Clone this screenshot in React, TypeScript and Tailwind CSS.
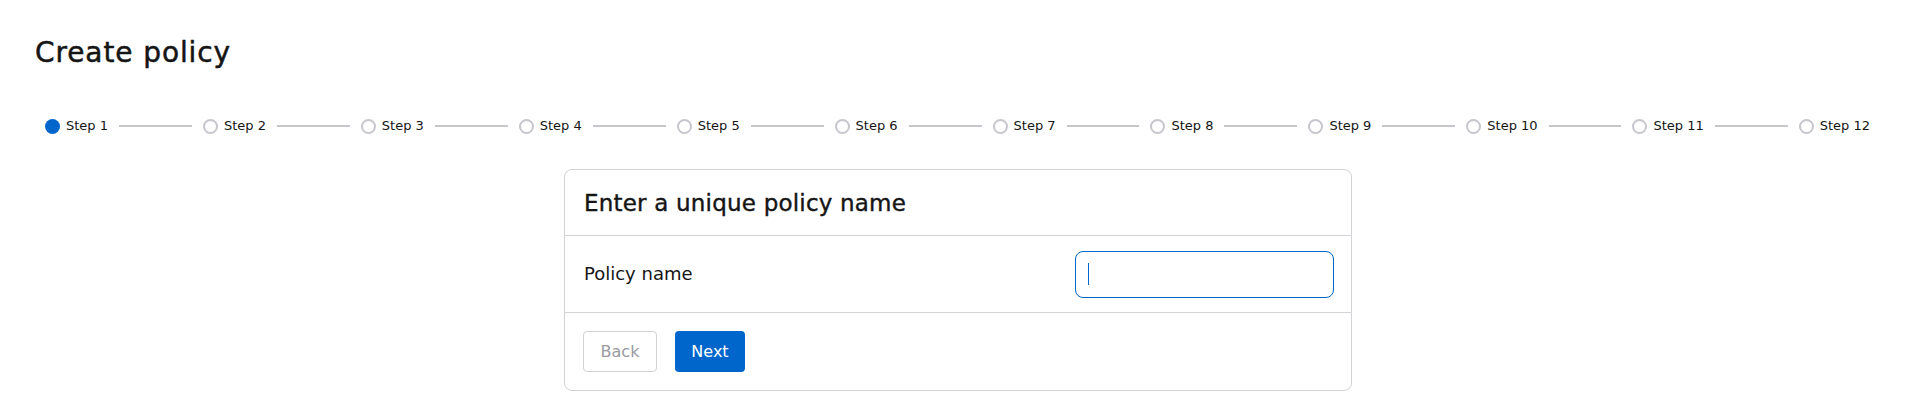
import React from "react";

const steps = Array.from({ length: 12 }, (_, i) => `Step ${i + 1}`);

export default function App() {
  return (
    <div
      className="min-h-[412px] w-full bg-white text-[#151515]"
      style={{ fontFamily: "'DejaVu Sans', Inter, sans-serif" }}
    >
      <div className="px-[35px] pt-[36px]">
        <h1 className="text-[28px] leading-[34px] tracking-[0.9px] [-webkit-text-stroke:0.5px_#151515]">
          Create policy
        </h1>
      </div>
      <div className="mt-[48px] flex items-center gap-[11px] pl-[45px] pr-[37px]">
        {steps.map((s, i) => (
          <React.Fragment key={s}>
            <div className="flex items-center gap-[6px] whitespace-nowrap">
              {i === 0 ? (
                <span className="h-[15px] w-[15px] rounded-full bg-[#0066cc]" />
              ) : (
                <span className="h-[15px] w-[15px] rounded-full border-2 border-[#c6c7cd] bg-white" />
              )}
              <span className="text-[13px] leading-[16px]">{s}</span>
            </div>
            {i < steps.length - 1 && <div className="h-[2px] flex-1 bg-[#c6c7cd]" />}
          </React.Fragment>
        ))}
      </div>
      <div className="mt-[35px] flex justify-center pl-[9px] pb-[21px]">
        <div className="w-[788px] rounded-[8px] border border-[#d2d2d7] bg-white">
          <div className="flex h-[66px] items-center border-b border-[#d2d2d7] px-[19px]">
            <h2 className="text-[23px] leading-[28px] tracking-[0.2px] [-webkit-text-stroke:0.4px_#151515]">
              Enter a unique policy name
            </h2>
          </div>
          <div className="flex h-[77px] items-center justify-between border-b border-[#d2d2d7] pl-[19px] pr-[17px]">
            <label className="text-[18px] leading-[22px]">Policy name</label>
            <div className="relative">
              <input
                aria-label="Policy name"
                className="h-[47px] w-[259px] rounded-[8px] border border-[#0066cc] bg-white px-[12px] text-[16px] outline-none caret-transparent"
              />
              <span className="pointer-events-none absolute left-[13px] top-[12px] h-[22px] w-[1px] bg-[#0066cc]" />
            </div>
          </div>
          <div className="flex h-[77px] items-center gap-[18px] px-[18px]">
            <button className="h-[41px] w-[74px] rounded-[4px] border border-[#d2d2d7] bg-white text-[16px] text-[#9a9a9f]">
              Back
            </button>
            <button className="h-[41px] w-[70px] rounded-[4px] bg-[#0066cc] text-[16px] text-white">
              Next
            </button>
          </div>
        </div>
      </div>
    </div>
  );
}
